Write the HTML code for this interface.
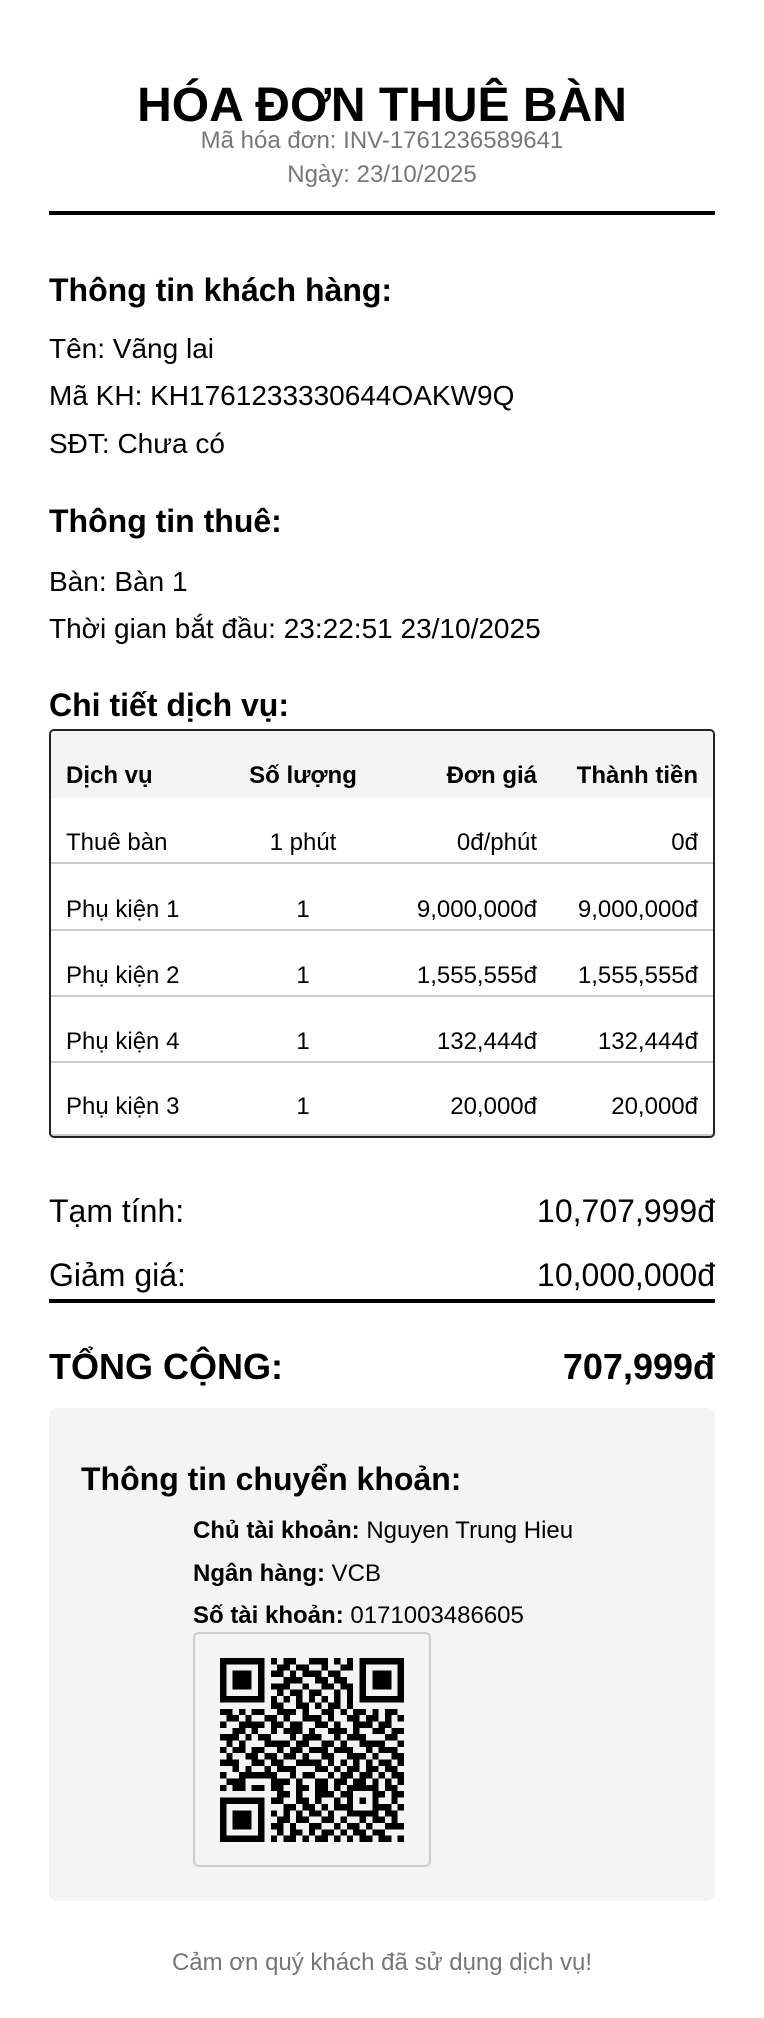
<!DOCTYPE html>
<html><head><meta charset="utf-8"><style>
*{margin:0;padding:0;box-sizing:border-box}
body{width:764px;height:2018px;background:#fff;font-family:"Liberation Sans",Arial,sans-serif;color:#000;position:relative;overflow:hidden}
.a{position:absolute;line-height:1.15;white-space:nowrap}
.c{left:0;width:764px;text-align:center}
.h{font-size:32px;font-weight:bold;left:49px}
.b{font-size:28px;left:49px}
.tb{position:absolute;left:49px;top:729px;width:666px;height:409px;border:2px solid #222;border-radius:5px;overflow:hidden}
.hd{position:absolute;left:0;top:0;width:662px;height:67px;background:#f4f4f4}
.sep{position:absolute;left:0;width:662px;height:2px;background:#ccc}
.t{position:absolute;font-size:24px;line-height:1.15;white-space:nowrap}
.bold{font-weight:bold}
.c1{left:15px}
.c2{left:166px;width:172px;text-align:center}
.c3{right:176px;text-align:right}
.c4{right:15px;text-align:right}
.tot{font-size:32px}
.bank{position:absolute;left:49px;top:1408px;width:666px;height:493px;background:#f4f4f4;border-radius:8px}
.bl{font-size:24px;left:193px}
</style></head><body>
<div class="a c" style="top:78px;font-size:48px;font-weight:bold">HÓA ĐƠN THUÊ BÀN</div>
<div class="a c" style="top:127px;font-size:24px;color:#777">Mã hóa đơn: INV-1761236589641</div>
<div class="a c" style="top:161px;font-size:24px;color:#777">Ngày: 23/10/2025</div>
<div style="position:absolute;left:49px;top:211px;width:666px;height:4px;background:#000"></div>

<div class="a h" style="top:272px">Thông tin khách hàng:</div>
<div class="a b" style="top:333px">Tên: Vãng lai</div>
<div class="a b" style="top:380px">Mã KH: KH1761233330644OAKW9Q</div>
<div class="a b" style="top:428px">SĐT: Chưa có</div>

<div class="a h" style="top:503px">Thông tin thuê:</div>
<div class="a b" style="top:566px">Bàn: Bàn 1</div>
<div class="a b" style="top:613px">Thời gian bắt đầu: 23:22:51 23/10/2025</div>

<div class="a h" style="top:687px">Chi tiết dịch vụ:</div>
<div class="tb">
 <div class="hd"></div>
 <div class="t bold c1" style="top:31px">Dịch vụ</div>
 <div class="t bold c2" style="top:31px">Số lượng</div>
 <div class="t bold c3" style="top:31px">Đơn giá</div>
 <div class="t bold c4" style="top:31px">Thành tiền</div>

 <div class="t c1" style="top:98px">Thuê bàn</div>
 <div class="t c2" style="top:98px">1 phút</div>
 <div class="t c3" style="top:98px">0đ/phút</div>
 <div class="t c4" style="top:98px">0đ</div>
 <div class="sep" style="top:131px"></div>

 <div class="t c1" style="top:165px">Phụ kiện 1</div>
 <div class="t c2" style="top:165px">1</div>
 <div class="t c3" style="top:165px">9,000,000đ</div>
 <div class="t c4" style="top:165px">9,000,000đ</div>
 <div class="sep" style="top:198px"></div>

 <div class="t c1" style="top:231px">Phụ kiện 2</div>
 <div class="t c2" style="top:231px">1</div>
 <div class="t c3" style="top:231px">1,555,555đ</div>
 <div class="t c4" style="top:231px">1,555,555đ</div>
 <div class="sep" style="top:264px"></div>

 <div class="t c1" style="top:297px">Phụ kiện 4</div>
 <div class="t c2" style="top:297px">1</div>
 <div class="t c3" style="top:297px">132,444đ</div>
 <div class="t c4" style="top:297px">132,444đ</div>
 <div class="sep" style="top:330px"></div>

 <div class="t c1" style="top:362px">Phụ kiện 3</div>
 <div class="t c2" style="top:362px">1</div>
 <div class="t c3" style="top:362px">20,000đ</div>
 <div class="t c4" style="top:362px">20,000đ</div>
 <div class="sep" style="top:403px"></div>
</div>

<div class="a tot" style="top:1193px;left:49px">Tạm tính:</div>
<div class="a tot" style="top:1193px;right:49px">10,707,999đ</div>
<div class="a tot" style="top:1257px;left:49px">Giảm giá:</div>
<div class="a tot" style="top:1257px;right:49px">10,000,000đ</div>
<div style="position:absolute;left:49px;top:1299px;width:666px;height:4px;background:#000"></div>
<div class="a" style="top:1346px;left:49px;font-size:36px;font-weight:bold">TỔNG CỘNG:</div>
<div class="a" style="top:1346px;right:49px;font-size:36px;font-weight:bold">707,999đ</div>

<div class="bank"></div>
<div class="a" style="top:1461px;left:81px;font-size:32px;font-weight:bold">Thông tin chuyển khoản:</div>
<div class="a bl" style="top:1517px"><b>Chủ tài khoản:</b> Nguyen Trung Hieu</div>
<div class="a bl" style="top:1560px"><b>Ngân hàng:</b> VCB</div>
<div class="a bl" style="top:1602px"><b>Số tài khoản:</b> 0171003486605</div>
<div style="position:absolute;left:193px;top:1632px;width:238px;height:235px;border:2px solid #ccc;border-radius:6px"></div>
<svg id="qr" style="position:absolute;left:220px;top:1658px" width="184" height="184" viewBox="0 0 29 29" shape-rendering="crispEdges"></svg>

<div class="a c" style="top:1949px;font-size:24px;color:#777">Cảm ơn quý khách đã sử dụng dịch vụ!</div>
<script>
var R=["11111110101100111010101111111","10000010011011001001101000001","10111010110101110110001011101","10111010001110011011001011101","10111010111001001101101011101","10000010010110110010101000001","11111110101010101010101111111","00000000110011010110100000000",
"11010110011101001101011010110","01101001101001110100110110101","10011110110110011010011101100","00110100101110100111010011011","11101011000101110010111000110","01010001111011001101001111001","10110110010110111011100101110","01001101101101001100111010011","11100110110011110101010101101","00101001011100011010110110110","10011111100101100101101101011","01110000111010011011011010101",
"10110110110011011010111110110","00000000011010011101100011011","11111110110011010010101010010","10000010001101101011100011101","10111010101010110100111110110","10111010011011001101001011010","10111010110100110010110100111","10000010010110101101011011000","11111110101101011010101101101"];
var s="";for(var y=0;y<29;y++)for(var x=0;x<29;x++)if(R[y][x]=="1")s+="M"+x+" "+y+"h1v1h-1z";
document.getElementById("qr").innerHTML='<path d="'+s+'" fill="#000"/>';
</script>
</body></html>
